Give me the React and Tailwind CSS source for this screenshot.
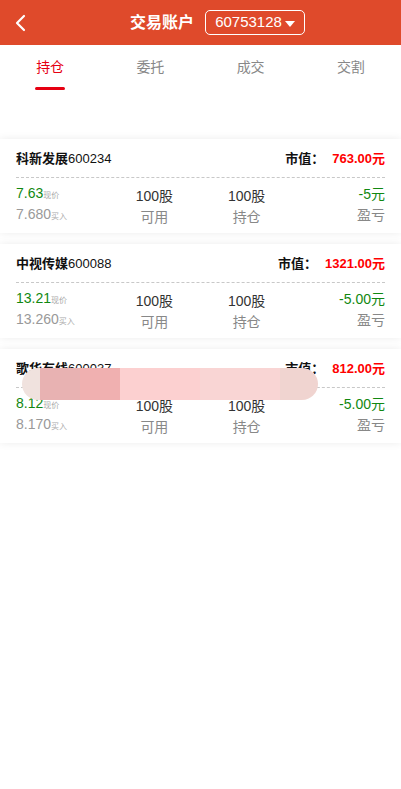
import React, { useState } from "react";

const positions = [
  { name: "科新发展", code: "600234", value: "763.00元", price: "7.63", cost: "7.680", avail: "100股", hold: "100股", pl: "-5元" },
  { name: "中视传媒", code: "600088", value: "1321.00元", price: "13.21", cost: "13.260", avail: "100股", hold: "100股", pl: "-5.00元" },
  { name: "歌华有线", code: "600037", value: "812.00元", price: "8.12", cost: "8.170", avail: "100股", hold: "100股", pl: "-5.00元" },
];

const tabs = ["持仓", "委托", "成交", "交割"];

function PositionCard({ item, blot }) {
  return (
    <div className="relative bg-white px-4 shadow-[0_0_8px_rgba(0,0,0,0.08)]">
      <div className="flex h-[39px] items-center justify-between border-b border-dashed border-[#c8c8c8] pt-[1px] text-[13px]">
        <div className="text-[#111]">
          <span className="font-bold">{item.name}</span>
          <span>{item.code}</span>
        </div>
        <div>
          <span className="font-bold text-[#111]">市值：</span>
          <span className="ml-2 font-bold text-[#ff0000]">{item.value}</span>
        </div>
      </div>
      <div className="grid h-[55px] grid-cols-4 items-start pt-[6px] text-[14px]">
        <div className="leading-[19px]">
          <div className="text-[#118811]">
            {item.price}
            <span className="text-[8px] text-[#aaa]">现价</span>
          </div>
          <div className="text-[#999]">
            {item.cost}
            <span className="text-[8px] text-[#aaa]">买入</span>
          </div>
        </div>
        <div className="pt-[2px] text-center leading-[21px]">
          <div className="text-[#333]">{item.avail}</div>
          <div className="text-[#888]">可用</div>
        </div>
        <div className="pt-[2px] text-center leading-[21px]">
          <div className="text-[#333]">{item.hold}</div>
          <div className="text-[#888]">持仓</div>
        </div>
        <div className="text-right leading-[21px]">
          <div className="text-[#118811]">{item.pl}</div>
          <div className="text-[#888]">盈亏</div>
        </div>
      </div>
      {blot ? (
        <div className="absolute left-[22px] top-[19px] h-[32px] w-[296px] rounded-full bg-[linear-gradient(90deg,#f0e2de_0px,#f0e2de_18px,#e8b2b2_18px,#e8b2b2_58px,#f0b0b0_58px,#f0b0b0_98px,#fcd0d0_98px,#fcd0d0_178px,#f9d5d4_178px,#f9d5d4_258px,#f0d4d0_258px)]" />
      ) : null}
    </div>
  );
}

export default function App() {
  const [active, setActive] = useState(0);

  return (
    <div className="min-h-[789px] bg-white font-['Liberation_Sans','Noto_Sans_CJK_SC',sans-serif]">
      <div className="relative flex h-[45px] items-center justify-center bg-[#df4a2b] pl-[34px]">
        <svg className="absolute left-[14px] top-[14px]" width="14" height="18" viewBox="0 0 14 18" fill="none">
          <path d="M10 2L3 9l7 7" stroke="#fff" strokeWidth="2.2" strokeLinecap="round" strokeLinejoin="round" />
        </svg>
        <span className="text-[16px] font-bold text-white">交易账户</span>
        <div className="ml-[11px] flex h-[25px] w-[100px] items-center justify-center rounded-[5px] border border-white text-[15px] text-white">
          60753128
          <svg className="ml-[3px] mt-[3px]" width="10" height="6" viewBox="0 0 10 6">
            <path d="M0 0h10L5 6z" fill="#fff" />
          </svg>
        </div>
      </div>

      <div className="grid h-[45px] grid-cols-4 text-[14px]">
        {tabs.map((t, i) => (
          <div
            key={t}
            className="flex cursor-pointer flex-col items-center"
            onClick={() => setActive(i)}
          >
            <span className={`mt-[12px] ${i === active ? "text-[#e60012]" : "text-[#888]"}`}>{t}</span>
            {i === active ? <div className="mt-[9px] h-[3px] w-[30px] rounded-full bg-[#e60012]" /> : null}
          </div>
        ))}
      </div>

      <div className="flex flex-col gap-[11px] pt-[49px]">
        {positions.map((p, i) => (
          <PositionCard key={p.code} item={p} blot={i === 2} />
        ))}
      </div>
    </div>
  );
}
